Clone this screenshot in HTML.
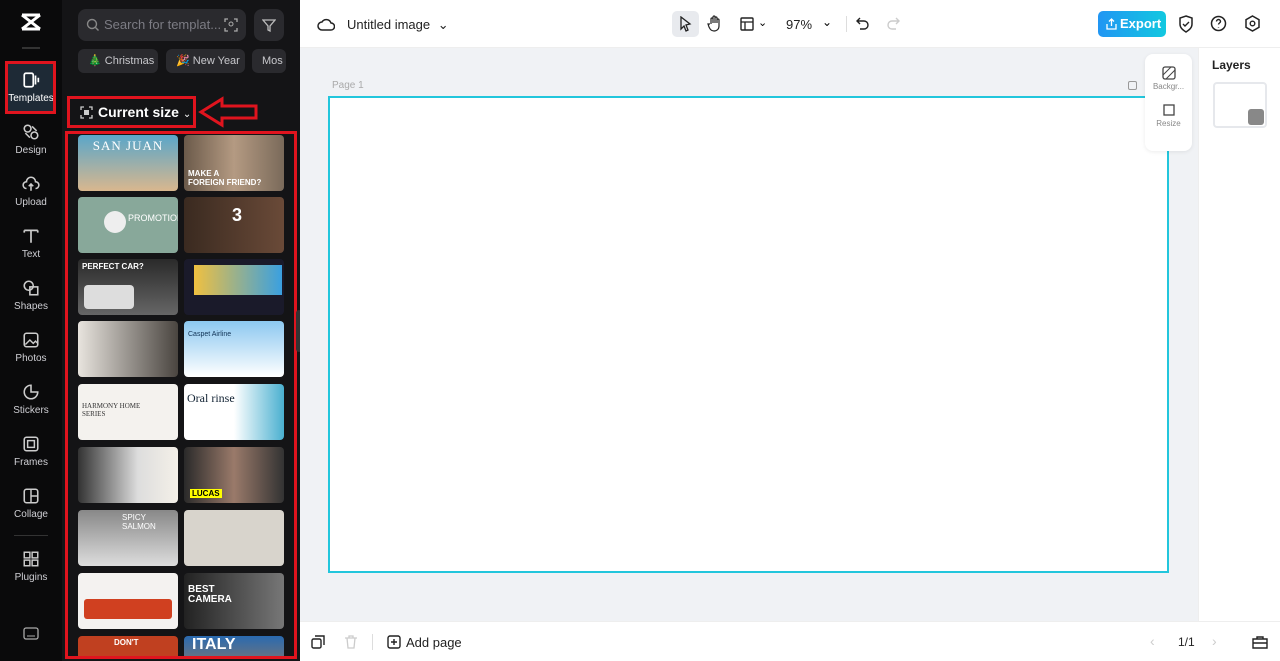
<!DOCTYPE html>
<html style="width:1280px;height:661px;overflow:hidden"><head><meta charset="utf-8"><style>
*{box-sizing:border-box;margin:0;padding:0}
html,body{width:1280px;height:661px;overflow:hidden}
body{font-family:"Liberation Sans",sans-serif;background:#fff;position:relative}
.side{position:absolute;left:0;top:0;width:62px;height:661px;background:#0a0a0b;color:#ddd}
.nav{position:absolute;left:0;width:62px;text-align:center;font-size:10px;color:#cfcfd4}
.nav svg{display:block;margin:0 auto 4px}
.panel{position:absolute;left:62px;top:0;width:238px;height:661px;background:#141416}
.search{position:absolute;left:16px;top:9px;width:168px;height:32px;border-radius:8px;background:#2a2a2e;color:#7c7c84;font-size:13px;line-height:32px;padding-left:26px}
.filter{position:absolute;left:192px;top:9px;width:30px;height:32px;border-radius:8px;background:#2a2a2e}
.chip{position:absolute;top:49px;height:24px;border-radius:6px;background:#2a2a2e;color:#c8c8cc;font-size:11px;line-height:24px;padding:0 10px;white-space:nowrap;overflow:hidden}
.grid{position:absolute;left:0;top:0;width:300px;height:658px;overflow:hidden}
.th{position:absolute;width:100px;height:56px;border-radius:4px;overflow:hidden}
.top{position:absolute;left:300px;top:0;width:980px;height:48px;background:#fff;border-bottom:1px solid #eee}
.canvasbg{position:absolute;left:300px;top:48px;width:898px;height:573px;background:#f0f2f5}
.bottom{position:absolute;left:300px;top:621px;width:980px;height:40px;background:#fff;border-top:1px solid #eee}
.layers{position:absolute;left:1198px;top:48px;width:82px;height:573px;background:#fff;border-left:1px solid #eee}
.red{position:absolute;border:3px solid #e0141e}
</style></head><body>
<div class="side">
  <svg style="position:absolute;left:19px;top:12px" width="24" height="20" viewBox="0 0 24 20"><path d="M3 3 L21 17 M21 3 L3 17 M3 3 H21 M3 17 H21" stroke="#fff" stroke-width="3" fill="none"/></svg>
  <div style="position:absolute;left:22px;top:47px;width:18px;height:2px;background:#333"></div>
  <div style="position:absolute;left:6px;top:62px;width:50px;height:50px;background:#1e2a36;border-radius:6px"></div>
  <div class="nav" style="top:71px;color:#fff"><svg width="18" height="18" viewBox="0 0 16 16"><rect x="2" y="2" width="8" height="12" rx="1.5" stroke="#fff" stroke-width="1.5" fill="none"/><path d="M12 4v8M14.5 6v4" stroke="#fff" stroke-width="1.5"/></svg>Templates</div>
  <div class="nav" style="top:123px"><svg width="18" height="18" viewBox="0 0 16 16"><circle cx="5" cy="5" r="3" stroke="#ccc" stroke-width="1.4" fill="none"/><circle cx="11" cy="11" r="3" stroke="#ccc" stroke-width="1.4" fill="none"/><path d="M9 3l4 4M3 9l4 4" stroke="#ccc" stroke-width="1.4"/></svg>Design</div>
  <div class="nav" style="top:175px"><svg width="18" height="18" viewBox="0 0 16 16"><path d="M4 12a3 3 0 010-6 4 4 0 018 0 3 3 0 010 6M8 8v6M6 10l2-2 2 2" stroke="#ccc" stroke-width="1.4" fill="none"/></svg>Upload</div>
  <div class="nav" style="top:227px"><svg width="18" height="18" viewBox="0 0 16 16"><path d="M2 3h12M8 3v11M2 3v2M14 3v2" stroke="#ccc" stroke-width="1.5" fill="none"/></svg>Text</div>
  <div class="nav" style="top:279px"><svg width="18" height="18" viewBox="0 0 16 16"><circle cx="6" cy="6" r="4" stroke="#ccc" stroke-width="1.4" fill="none"/><rect x="7" y="7" width="7" height="7" stroke="#ccc" stroke-width="1.4" fill="none"/></svg>Shapes</div>
  <div class="nav" style="top:331px"><svg width="18" height="18" viewBox="0 0 16 16"><rect x="2" y="2" width="12" height="12" rx="2" stroke="#ccc" stroke-width="1.4" fill="none"/><path d="M3 12l4-4 3 3 2-2 2 2" stroke="#ccc" stroke-width="1.3" fill="none"/></svg>Photos</div>
  <div class="nav" style="top:383px"><svg width="18" height="18" viewBox="0 0 16 16"><path d="M14 8a6 6 0 11-6-6v6z" stroke="#ccc" stroke-width="1.4" fill="none"/></svg>Stickers</div>
  <div class="nav" style="top:435px"><svg width="18" height="18" viewBox="0 0 16 16"><rect x="2" y="2" width="12" height="12" rx="2" stroke="#ccc" stroke-width="1.4" fill="none"/><rect x="5" y="5" width="6" height="6" stroke="#ccc" stroke-width="1.3" fill="none"/></svg>Frames</div>
  <div class="nav" style="top:487px"><svg width="18" height="18" viewBox="0 0 16 16"><rect x="2" y="2" width="12" height="12" rx="2" stroke="#ccc" stroke-width="1.4" fill="none"/><path d="M8 2v12M8 8h6" stroke="#ccc" stroke-width="1.3"/></svg>Collage</div>
  <div style="position:absolute;left:14px;top:535px;width:34px;height:1px;background:#333"></div>
  <div class="nav" style="top:550px"><svg width="18" height="18" viewBox="0 0 16 16"><rect x="2" y="2" width="5" height="5" stroke="#ccc" stroke-width="1.3" fill="none"/><rect x="9" y="2" width="5" height="5" stroke="#ccc" stroke-width="1.3" fill="none"/><rect x="2" y="9" width="5" height="5" stroke="#ccc" stroke-width="1.3" fill="none"/><rect x="9" y="9" width="5" height="5" stroke="#ccc" stroke-width="1.3" fill="none"/></svg>Plugins</div>
  <svg style="position:absolute;left:23px;top:627px" width="16" height="14" viewBox="0 0 16 14"><rect x="1" y="1" width="14" height="11" rx="2" stroke="#aaa" stroke-width="1.3" fill="none"/><path d="M4 9h8" stroke="#aaa"/></svg>
</div>
<div class="red" style="left:5px;top:61px;width:51px;height:53px"></div>

<div class="panel">
  <div class="search"><svg style="position:absolute;left:8px;top:9px" width="14" height="14" viewBox="0 0 14 14"><circle cx="6" cy="6" r="4.5" stroke="#888" stroke-width="1.4" fill="none"/><path d="M9.5 9.5l3 3" stroke="#888" stroke-width="1.4"/></svg>Search for templat...<svg style="position:absolute;right:8px;top:9px" width="14" height="14" viewBox="0 0 14 14"><path d="M1 4V1h3M10 1h3v3M13 10v3h-3M4 13H1v-3" stroke="#aaa" stroke-width="1.3" fill="none"/><circle cx="7" cy="6" r="2" stroke="#aaa" fill="none"/></svg></div>
  <div class="filter"><svg style="position:absolute;left:8px;top:9px" width="14" height="14" viewBox="0 0 14 14"><path d="M1 2h12L8 8v5L6 12V8z" stroke="#bbb" stroke-width="1.3" fill="none"/></svg></div>
  <div class="chip" style="left:16px;width:80px">🎄 Christmas</div>
  <div class="chip" style="left:104px;width:79px">🎉 New Year</div>
  <div class="chip" style="left:190px;width:34px">Mos</div>
  <div style="position:absolute;left:18px;top:104px;color:#fff;font-size:14px;font-weight:bold">
    <svg style="vertical-align:-2px;margin-right:5px" width="13" height="13" viewBox="0 0 13 13"><path d="M1 4V1h3M9 1h3v3M12 9v3H9M4 12H1V9" stroke="#ccc" stroke-width="1.3" fill="none"/><rect x="4" y="4" width="5" height="5" fill="#ccc"/></svg>Current size <span style="font-size:10px;font-weight:normal">⌄</span></div>
</div>
<div class="red" style="left:67px;top:96px;width:129px;height:32px"></div>
<svg style="position:absolute;left:198px;top:96px" width="62" height="32" viewBox="0 0 62 32"><path d="M3 16 L24 3 V10 H58 V22 H24 V29 Z" stroke="#e0141e" stroke-width="3" fill="none"/></svg>

<div class="grid">
<div class="th" style="left:78px;top:135px;background:linear-gradient(#5aa6c9,#d9b78e)"><div style="color:#fff;font:13px 'Liberation Serif',serif;text-align:center;margin-top:3px;letter-spacing:1px">SAN JUAN</div></div>
<div class="th" style="left:184px;top:135px;background:linear-gradient(90deg,#6b5a4a,#b49a82,#7a6a5a)"><div style="position:absolute;left:4px;top:34px;color:#fff;font-size:8px;font-weight:bold">MAKE A<br>FOREIGN FRIEND?</div></div>
<div class="th" style="left:78px;top:197px;background:#88a89a"><div style="position:absolute;left:50px;top:16px;color:#fff;font-size:9px">PROMOTION</div><div style="position:absolute;left:26px;top:14px;width:22px;height:22px;border-radius:50%;background:#eee"></div></div>
<div class="th" style="left:184px;top:197px;background:linear-gradient(90deg,#3a2a20,#6a4a38)"><div style="position:absolute;left:48px;top:8px;color:#fff;font-size:18px;font-weight:bold">3</div></div>
<div class="th" style="left:78px;top:259px;background:linear-gradient(#2a2a2a,#666)"><div style="position:absolute;left:4px;top:3px;color:#fff;font-size:8px;font-weight:bold">PERFECT CAR?</div><div style="position:absolute;left:6px;top:26px;width:50px;height:24px;background:#ddd;border-radius:4px"></div></div>
<div class="th" style="left:184px;top:259px;background:#1a1a2a"><div style="position:absolute;left:10px;top:6px;width:88px;height:30px;background:linear-gradient(90deg,#f0c040,#3aa0e0)"></div></div>
<div class="th" style="left:78px;top:321px;background:linear-gradient(90deg,#e8e4de,#4a4540)"></div>
<div class="th" style="left:184px;top:321px;background:linear-gradient(#8cc8f0,#fff)"><div style="position:absolute;left:4px;top:10px;font-size:7px;color:#135">Caspet Airline</div></div>
<div class="th" style="left:78px;top:384px;background:#f4f2ee"><div style="position:absolute;left:4px;top:18px;font:7px 'Liberation Serif',serif;color:#333">HARMONY HOME<br>SERIES</div></div>
<div class="th" style="left:184px;top:384px;background:linear-gradient(90deg,#fff 50%,#4ab0d0)"><div style="position:absolute;left:3px;top:7px;font:12px 'Liberation Serif',serif;color:#123">Oral rinse</div></div>
<div class="th" style="left:78px;top:447px;background:linear-gradient(90deg,#333,#ddd 60%,#f4f0e8)"></div>
<div class="th" style="left:184px;top:447px;background:linear-gradient(90deg,#2a2a2a,#9a7a6a,#333)"><div style="position:absolute;left:6px;top:42px;background:#ff0;color:#000;font-size:8px;font-weight:bold;padding:0 2px">LUCAS</div></div>
<div class="th" style="left:78px;top:510px;background:linear-gradient(#888,#ddd)"><div style="position:absolute;left:44px;top:3px;color:#fff;font-size:8px">SPICY SALMON</div></div>
<div class="th" style="left:184px;top:510px;background:#d8d4cc"></div>
<div class="th" style="left:78px;top:573px;background:#f4f2f0"><div style="position:absolute;left:6px;top:26px;width:88px;height:20px;background:#d04020;border-radius:3px"></div></div>
<div class="th" style="left:184px;top:573px;background:linear-gradient(90deg,#222,#777)"><div style="position:absolute;left:4px;top:12px;color:#fff;font-size:10px;font-weight:bold;line-height:10px">BEST<br>CAMERA</div></div>
<div class="th" style="left:78px;top:636px;background:#c04020"><div style="position:absolute;left:36px;top:2px;color:#fff;font-size:8px;font-weight:bold">DON'T</div></div>
<div class="th" style="left:184px;top:636px;background:linear-gradient(#2a6ab0,#c08040)"><div style="position:absolute;left:8px;top:0px;color:#fff;font-size:16px;font-weight:bold">ITALY</div></div>
</div>
<div class="red" style="left:65px;top:131px;width:232px;height:528px"></div>

<div style="position:absolute;left:296px;top:310px;width:6px;height:42px;background:#333;border-radius:3px"></div>

<div class="top">
  <svg style="position:absolute;left:17px;top:16px" width="18" height="16" viewBox="0 0 18 16"><path d="M5 14a4 4 0 010-8 5 5 0 019 1 3.5 3.5 0 010 7z" stroke="#222" stroke-width="1.5" fill="none"/></svg>
  <div style="position:absolute;left:47px;top:17px;font-size:13px;color:#222">Untitled image <span style="margin-left:4px">⌄</span></div>
  <div style="position:absolute;left:372px;top:11px;width:27px;height:26px;background:#e8eaee;border-radius:5px"></div>
  <svg style="position:absolute;left:378px;top:16px" width="14" height="16" viewBox="0 0 14 16"><path d="M3 1l9 7-4 1 2 5-2 1-2-5-3 3z" stroke="#222" stroke-width="1.3" fill="none"/></svg>
  <svg style="position:absolute;left:407px;top:15px" width="16" height="18" viewBox="0 0 16 18"><path d="M4 9V4a1 1 0 012 0v4M6 8V2a1 1 0 012 0v6M8 8V3a1 1 0 012 0v5M10 8V5a1 1 0 012 0v6c0 3-2 5-5 5s-4-2-5-4l-1-3 2 0" stroke="#222" stroke-width="1.2" fill="none"/></svg>
  <svg style="position:absolute;left:440px;top:17px" width="14" height="14" viewBox="0 0 14 14"><rect x="1" y="1" width="12" height="12" rx="1" stroke="#222" stroke-width="1.4" fill="none"/><path d="M1 5h12M5 5v8" stroke="#222" stroke-width="1.3"/></svg>
  <div style="position:absolute;left:458px;top:16px;font-size:11px">⌄</div>
  <div style="position:absolute;left:486px;top:17px;font-size:13px;color:#222">97%</div>
  <div style="position:absolute;left:522px;top:15px;font-size:12px">⌄</div>
  <div style="position:absolute;left:546px;top:16px;width:1px;height:16px;background:#ddd"></div>
  <svg style="position:absolute;left:556px;top:16px" width="14" height="16" viewBox="0 0 14 16"><path d="M4 2L1 5l3 3M1 5h7a4 4 0 010 8H4" stroke="#222" stroke-width="1.4" fill="none"/></svg>
  <svg style="position:absolute;left:586px;top:16px" width="14" height="16" viewBox="0 0 14 16"><path d="M10 2l3 3-3 3M13 5H6a4 4 0 000 8h4" stroke="#ccc" stroke-width="1.4" fill="none"/></svg>
  <div style="position:absolute;left:798px;top:11px;width:68px;height:26px;border-radius:5px;background:linear-gradient(90deg,#2196f3,#12c8e0);color:#fff;font-size:13px;font-weight:bold;line-height:26px;padding-left:22px">Export<svg style="position:absolute;left:8px;top:7px" width="11" height="12" viewBox="0 0 11 12"><path d="M5.5 8V1M3 3.5l2.5-2.5 2.5 2.5M1 6v5h9V6" stroke="#fff" stroke-width="1.3" fill="none"/></svg></div>
  <svg style="position:absolute;left:878px;top:15px" width="16" height="18" viewBox="0 0 16 18"><path d="M8 1l6 2v6c0 4-3 6-6 8-3-2-6-4-6-8V3z" stroke="#222" stroke-width="1.5" fill="none"/><path d="M5 9l2 2 4-4" stroke="#222" stroke-width="1.4" fill="none"/></svg>
  <svg style="position:absolute;left:910px;top:15px" width="17" height="17" viewBox="0 0 17 17"><circle cx="8.5" cy="8.5" r="7" stroke="#222" stroke-width="1.5" fill="none"/><path d="M6.5 6.5a2 2 0 114 0c0 1.5-2 1.5-2 3M8.5 12v.5" stroke="#222" stroke-width="1.4" fill="none"/></svg>
  <svg style="position:absolute;left:944px;top:15px" width="17" height="17" viewBox="0 0 17 17"><path d="M8.5 1l6.5 3.7v7.6L8.5 16 2 12.3V4.7z" stroke="#222" stroke-width="1.5" fill="none"/><circle cx="8.5" cy="8.5" r="2.3" stroke="#222" stroke-width="1.4" fill="none"/></svg>
</div>
<div class="canvasbg">
  <div style="position:absolute;left:32px;top:32px;font-size:10px;color:#aaa">Page 1</div>
  <div style="position:absolute;left:828px;top:33px;width:9px;height:9px;border:1px solid #999;border-radius:2px"></div>
  <div style="position:absolute;left:28px;top:48px;width:841px;height:477px;background:#fff;border:2px solid #22c6dc"></div>
  <div style="position:absolute;left:845px;top:6px;width:47px;height:97px;background:#fff;border-radius:8px;box-shadow:0 1px 4px rgba(0,0,0,.08);font-size:8px;color:#888;text-align:center">
    <svg style="margin-top:12px" width="14" height="14" viewBox="0 0 14 14"><rect x="1" y="1" width="12" height="12" rx="2" stroke="#444" stroke-width="1.3" fill="none"/><path d="M1 9l8-8M4 13l9-9" stroke="#444"/></svg>
    <div>Backgr...</div>
    <svg style="margin-top:12px" width="14" height="14" viewBox="0 0 14 14"><rect x="2" y="2" width="10" height="10" stroke="#444" stroke-width="1.3" fill="none"/></svg>
    <div>Resize</div>
  </div>
</div>
<div class="layers">
  <div style="position:absolute;left:13px;top:10px;font-size:12px;font-weight:bold;color:#222">Layers</div>
  <div style="position:absolute;left:14px;top:34px;width:54px;height:46px;border:2px solid #e6e8ec;border-radius:4px;background:#fff"></div>
  <div style="position:absolute;left:49px;top:61px;width:16px;height:16px;background:#888;border-radius:3px"></div>
</div>
<div class="bottom">
  <svg style="position:absolute;left:11px;top:13px" width="14" height="14" viewBox="0 0 14 14"><rect x="1" y="4" width="9" height="9" rx="1.5" stroke="#222" stroke-width="1.4" fill="none"/><path d="M4 1h9v9" stroke="#222" stroke-width="1.4" fill="none"/></svg>
  <svg style="position:absolute;left:44px;top:13px" width="14" height="14" viewBox="0 0 14 14"><path d="M1 3h12M5 3V1h4v2M3 3l1 10h6l1-10" stroke="#ccc" stroke-width="1.3" fill="none"/></svg>
  <div style="position:absolute;left:72px;top:12px;width:1px;height:16px;background:#ddd"></div>
  <svg style="position:absolute;left:87px;top:13px" width="15" height="15" viewBox="0 0 15 15"><rect x="1" y="1" width="12" height="12" rx="2" stroke="#222" stroke-width="1.4" fill="none"/><path d="M7 4v6M4 7h6" stroke="#222" stroke-width="1.4"/></svg>
  <div style="position:absolute;left:106px;top:13px;font-size:13px;color:#222">Add page</div>
  <div style="position:absolute;left:850px;top:11px;font-size:14px;color:#ccc">‹</div>
  <div style="position:absolute;left:878px;top:13px;font-size:12px;color:#222">1/1</div>
  <div style="position:absolute;left:912px;top:11px;font-size:14px;color:#ccc">›</div>
  <svg style="position:absolute;left:952px;top:13px" width="16" height="14" viewBox="0 0 16 14"><path d="M5 4V2h6v2M1 4h14v9H1zM1 8h14" stroke="#222" stroke-width="1.4" fill="none"/></svg>
</div>
</body></html>
